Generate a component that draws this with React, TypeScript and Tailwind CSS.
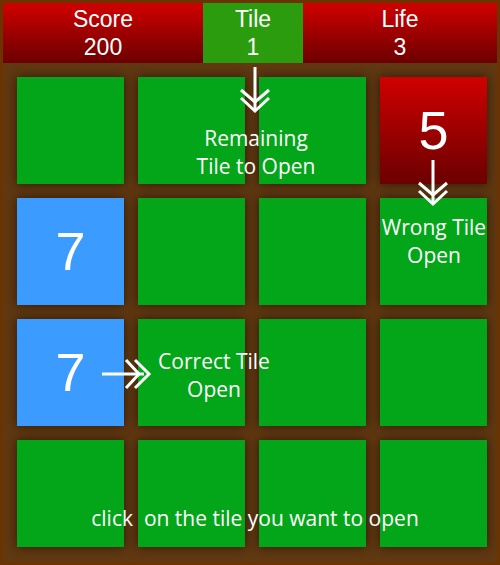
const tiles = [
  { kind: 'green' }, { kind: 'green' }, { kind: 'green' }, { kind: 'red', value: 5 },
  { kind: 'blue', value: 7 }, { kind: 'green' }, { kind: 'green' }, { kind: 'green' },
  { kind: 'blue', value: 7 }, { kind: 'green' }, { kind: 'green' }, { kind: 'green' },
  { kind: 'green' }, { kind: 'green' }, { kind: 'green' }, { kind: 'green' },
]

const tileClass: Record<string, string> = {
  green: 'bg-[#03a618]',
  blue: 'bg-[#3c9bff]',
  red: 'bg-gradient-to-b from-[#d10000] to-[#6c0000]',
}

function DownArrow() {
  return (
    <svg width="32" height="50" viewBox="0 0 32 50" fill="none" stroke="white" strokeWidth="3">
      <path d="M16 0 V42" />
      <path d="M2 23 L16 35 L30 23" />
      <path d="M2 31 L16 44 L30 31" />
    </svg>
  )
}

function RightArrow() {
  return (
    <svg width="52" height="32" viewBox="0 0 52 32" fill="none" stroke="white" strokeWidth="3">
      <path d="M0 16 H42" />
      <path d="M24 2 L37 16 L24 30" />
      <path d="M33 2 L47 16 L33 30" />
    </svg>
  )
}

function Stat({ label, value, className }: { label: string; value: string | number; className: string }) {
  return (
    <div className={`flex flex-col items-center justify-center pb-px text-[23px] leading-[28px] text-white ${className}`}>
      <span>{label}</span>
      <span>{value}</span>
    </div>
  )
}

export default function App() {
  return (
    <div
      className="relative h-[565px] w-[500px] overflow-hidden border-[3px] border-[#6a3300] bg-[#603811]"
      style={{ fontFamily: '"Liberation Sans", Arial, sans-serif' }}
    >
      <header className="flex h-[60px]">
        <Stat label="Score" value={200} className="w-[200px] bg-gradient-to-b from-[#d20000] to-[#6c0000]" />
        <Stat label="Tile" value={1} className="w-[100px] bg-[#2a9c0e]" />
        <Stat label="Life" value={3} className="flex-1 bg-gradient-to-b from-[#d20000] to-[#6c0000]" />
      </header>

      <div className="grid grid-cols-[repeat(4,107px)] gap-[14px] pl-[14px] pt-[14px]">
        {tiles.map((t, i) => (
          <div
            key={i}
            className={`flex h-[107px] w-[107px] items-center justify-center text-[54px] text-white shadow-[0_0_10px_rgba(0,0,0,0.55)] ${tileClass[t.kind]}`}
          >
            {t.value}
          </div>
        ))}
      </div>

      <div
        className="pointer-events-none text-[21px] leading-[28px] text-white"
        style={{ fontFamily: '"Open Sans", sans-serif' }}
      >
        <div className="absolute left-[236px] top-[64px]"><DownArrow /></div>
        <div className="absolute left-[414px] top-[157px]"><DownArrow /></div>
        <div className="absolute left-[99px] top-[355px]"><RightArrow /></div>

        <div className="absolute left-[153px] top-[121px] w-[200px] text-center">Remaining<br />Tile to Open</div>
        <div className="absolute left-[331px] top-[210px] w-[200px] text-center">Wrong Tile<br />Open</div>
        <div className="absolute left-[111px] top-[344px] w-[200px] text-center">Correct Tile<br />Open</div>
        <div className="absolute left-[2px] top-[501px] w-[500px] whitespace-pre text-center">click  on the tile you want to open</div>
      </div>
    </div>
  )
}
